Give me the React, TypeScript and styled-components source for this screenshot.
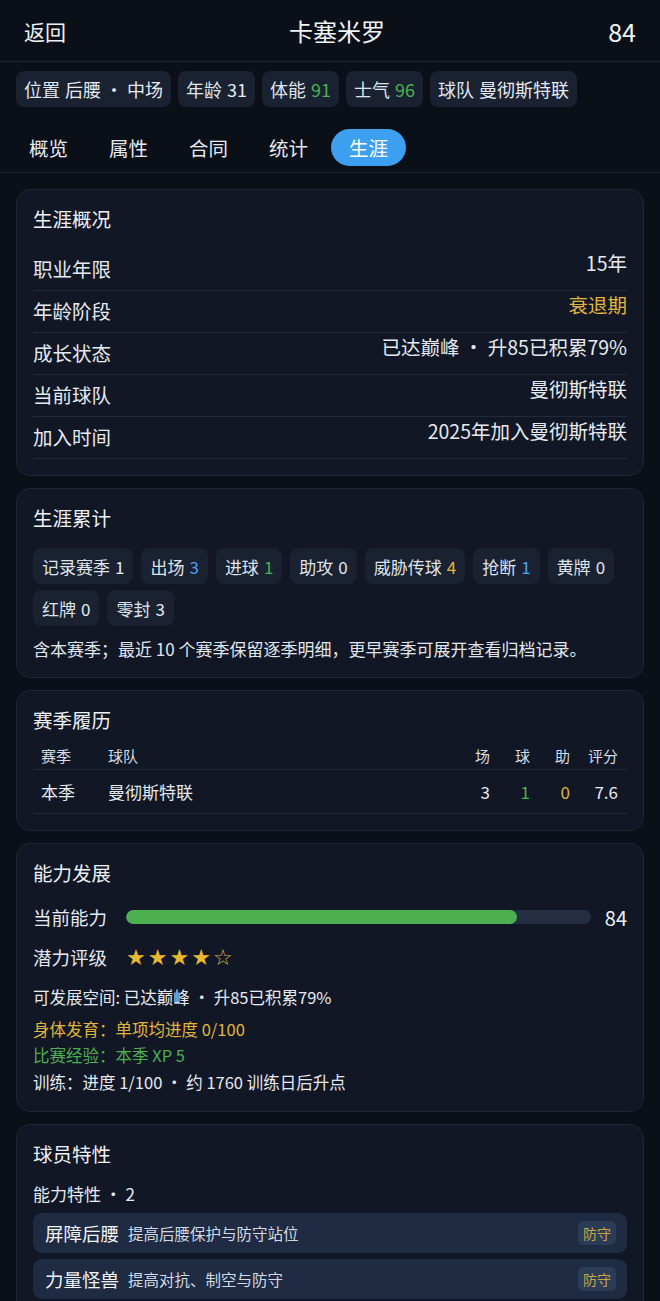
import React from 'react';
import styled, { createGlobalStyle } from 'styled-components';

// --- data ---
type Tone = 'plain' | 'blue' | 'green' | 'gold';

const TONE_COLORS: Record<Tone, string> = {
  plain: '#e6eaf0',
  blue: '#4aa3f0',
  green: '#4caf50',
  gold: '#e0b53c',
};

const INFO_CHIPS: { label: string; value: string; tone: Tone }[] = [
  { label: '位置', value: '后腰 · 中场', tone: 'plain' },
  { label: '年龄', value: '31', tone: 'plain' },
  { label: '体能', value: '91', tone: 'green' },
  { label: '士气', value: '96', tone: 'green' },
  { label: '球队', value: '曼彻斯特联', tone: 'plain' },
];

const TABS = ['概览', '属性', '合同', '统计', '生涯'];

const OVERVIEW_ROWS: { label: string; value: string; tone: Tone }[] = [
  { label: '职业年限', value: '15年', tone: 'plain' },
  { label: '年龄阶段', value: '衰退期', tone: 'gold' },
  { label: '成长状态', value: '已达巅峰 · 升85已积累79%', tone: 'plain' },
  { label: '当前球队', value: '曼彻斯特联', tone: 'plain' },
  { label: '加入时间', value: '2025年加入曼彻斯特联', tone: 'plain' },
];

const TOTALS: { label: string; value: string; tone: Tone }[] = [
  { label: '记录赛季', value: '1', tone: 'plain' },
  { label: '出场', value: '3', tone: 'blue' },
  { label: '进球', value: '1', tone: 'green' },
  { label: '助攻', value: '0', tone: 'plain' },
  { label: '威胁传球', value: '4', tone: 'gold' },
  { label: '抢断', value: '1', tone: 'blue' },
  { label: '黄牌', value: '0', tone: 'plain' },
  { label: '红牌', value: '0', tone: 'plain' },
  { label: '零封', value: '3', tone: 'plain' },
];

const TRAITS = [
  { name: '屏障后腰', desc: '提高后腰保护与防守站位', tag: '防守' },
  { name: '力量怪兽', desc: '提高对抗、制空与防守', tag: '防守' },
];

const ABILITY = 84;

// --- styles ---
const GlobalStyle = createGlobalStyle`
  body {
    margin: 0;
    background: #0b0f18;
    font-family: 'Noto Sans CJK SC', 'Noto Sans', sans-serif;
    color: #e6eaf0;
  }
`;

const Page = styled.div`
  width: 660px;
  min-height: 1301px;
  background: #0b0f18;
`;

const Header = styled.header`
  display: flex;
  justify-content: space-between;
  align-items: center;
  height: 61px;
  padding: 0 24px;
  border-bottom: 1px solid #1d2430;
`;

const BackLink = styled.span`
  font-size: 21px;
  color: #eef1f5;
`;

const Title = styled.h1`
  margin: 0;
  font-size: 24px;
  font-weight: 400;
  color: #f2f4f7;
`;

const Rating = styled.span`
  font-size: 25px;
  color: #f2f4f7;
`;

const InfoRow = styled.div`
  display: flex;
  flex-wrap: wrap;
  gap: 7px;
  padding: 9px 16px 0;
`;

const Chip = styled.span<{ $size: number; $pad: number }>`
  display: inline-flex;
  align-items: center;
  gap: 5px;
  height: 36px;
  padding: 0 ${({ $pad }) => $pad}px;
  border-radius: 8px;
  background: #1a2130;
  font-size: ${({ $size }) => $size}px;
  color: #dfe4ec;
  white-space: nowrap;
`;

const ChipValue = styled.span<{ $tone: Tone }>`
  color: ${({ $tone }) => TONE_COLORS[$tone]};
`;

const TabBar = styled.nav`
  display: flex;
  gap: 5px;
  padding: 22px 11px 6px;
  border-bottom: 1px solid #1d2430;
`;

const Tab = styled.span<{ $active: boolean }>`
  display: inline-flex;
  align-items: center;
  justify-content: center;
  width: 75px;
  height: 37px;
  border-radius: 19px;
  font-size: 19.5px;
  color: ${({ $active }) => ($active ? '#ffffff' : '#e6eaf0')};
  background: ${({ $active }) => ($active ? '#3d9ff0' : 'transparent')};
`;

const Content = styled.main`
  display: flex;
  flex-direction: column;
  gap: 12px;
  padding: 16px;
`;

const Card = styled.section`
  background: #111725;
  border: 1px solid #1e2534;
  border-radius: 14px;
  padding: 16px;
`;

const CardTitle = styled.h2`
  margin: 0;
  font-size: 19.5px;
  line-height: 26px;
  font-weight: 400;
  color: #eef1f5;
`;

const KeyValueList = styled.div`
  margin-top: 17px;
`;

const KeyValueRow = styled.div`
  display: flex;
  justify-content: space-between;
  align-items: flex-start;
  box-sizing: border-box;
  height: 42px;
  padding-top: 6px;
  border-bottom: 1px solid #232b3a;
`;

const KeyLabel = styled.span`
  font-size: 19.5px;
  line-height: 28px;
  color: #e6eaf0;
`;

const KeyValue = styled.span<{ $tone: Tone }>`
  font-size: 19.5px;
  line-height: 16px;
  color: ${({ $tone }) => TONE_COLORS[$tone]};
`;

const ChipWrap = styled.div`
  display: flex;
  flex-wrap: wrap;
  gap: 6px 8px;
  margin-top: 17px;
`;

const Note = styled.p`
  margin: 11px 0 0;
  font-size: 17px;
  line-height: 24px;
  color: #e1e6ed;
`;

const TableRow = styled.div<{ $head?: boolean }>`
  display: grid;
  grid-template-columns: 67px 1fr 40px 40px 40px 48px;
  align-items: center;
  height: ${({ $head }) => ($head ? 28 : 43)}px;
  padding: 0 9px 0 8px;
  border-bottom: 1px solid #232b3a;
  font-size: ${({ $head }) => ($head ? 15 : 17)}px;
  color: ${({ $head }) => ($head ? '#d7dce4' : '#e6eaf0')};
  &:first-of-type {
    margin-top: 8px;
  }
`;

const Cell = styled.span<{ $num?: boolean; $tone?: Tone }>`
  text-align: ${({ $num }) => ($num ? 'right' : 'left')};
  color: ${({ $tone }) => ($tone ? TONE_COLORS[$tone] : 'inherit')};
`;

const MeterRow = styled.div`
  display: flex;
  align-items: center;
  gap: 11px;
  height: 28px;
  margin-top: 17px;
`;

const MeterLabel = styled.span`
  margin-right: 8px;
  font-size: 18.5px;
  color: #e6eaf0;
  white-space: nowrap;
`;

const Track = styled.div`
  flex: 1;
  height: 14px;
  border-radius: 7px;
  background: #252e42;
  overflow: hidden;
`;

const Fill = styled.div`
  height: 100%;
  border-radius: 7px;
  background: #4caf50;
`;

const MeterValue = styled.span`
  width: 25px;
  text-align: right;
  font-size: 20px;
  color: #eef1f5;
`;

const StarRow = styled.div`
  display: flex;
  align-items: center;
  gap: 11px;
  height: 28px;
  margin-top: 12px;
`;

const Stars = styled.span`
  display: inline-flex;
  gap: 2px;
  font-family: 'DejaVu Sans', sans-serif;
  font-size: 22px;
`;

const Star = styled.span<{ $on: boolean }>`
  color: ${({ $on }) => ($on ? '#e8b92e' : '#d8b24a')};
`;

const DevLine = styled.p<{ $tone: Tone; $gap: number }>`
  margin: ${({ $gap }) => $gap}px 0 0;
  font-size: 16.5px;
  line-height: 26px;
  color: ${({ $tone }) => ($tone === 'plain' ? '#e6eaf0' : TONE_COLORS[$tone])};
`;

const SubTitle = styled.div`
  margin-top: 14px;
  font-size: 17px;
  line-height: 26px;
  color: #e6eaf0;
`;

const TraitList = styled.div`
  display: flex;
  flex-direction: column;
  gap: 6px;
  margin-top: 6px;
`;

const TraitRow = styled.div`
  display: flex;
  align-items: center;
  gap: 9px;
  height: 40px;
  padding: 0 11px 0 12px;
  border-radius: 9px;
  background: #1e2b42;
`;

const TraitName = styled.span`
  font-size: 18.5px;
  color: #f2f4f7;
`;

const TraitDesc = styled.span`
  flex: 1;
  font-size: 15.5px;
  color: #d3d9e2;
`;

const TraitTag = styled.span`
  padding: 2px 5px;
  border-radius: 5px;
  background: #2b3c57;
  font-size: 14px;
  color: #c9a544;
`;

// --- component ---
const App: React.FC = () => {
  return (
    <Page>
      <GlobalStyle />
      <Header>
        <BackLink>返回</BackLink>
        <Title>卡塞米罗</Title>
        <Rating>84</Rating>
      </Header>

      <InfoRow>
        {INFO_CHIPS.map((chip) => (
          <Chip key={chip.label} $size={18} $pad={8}>
            {chip.label}
            <ChipValue $tone={chip.tone}>{chip.value}</ChipValue>
          </Chip>
        ))}
      </InfoRow>

      <TabBar>
        {TABS.map((tab) => (
          <Tab key={tab} $active={tab === '生涯'}>
            {tab}
          </Tab>
        ))}
      </TabBar>

      <Content>
        <Card>
          <CardTitle>生涯概况</CardTitle>
          <KeyValueList>
            {OVERVIEW_ROWS.map((row) => (
              <KeyValueRow key={row.label}>
                <KeyLabel>{row.label}</KeyLabel>
                <KeyValue $tone={row.tone}>{row.value}</KeyValue>
              </KeyValueRow>
            ))}
          </KeyValueList>
        </Card>

        <Card>
          <CardTitle>生涯累计</CardTitle>
          <ChipWrap>
            {TOTALS.map((item) => (
              <Chip key={item.label} $size={17} $pad={9}>
                {item.label}
                <ChipValue $tone={item.tone}>{item.value}</ChipValue>
              </Chip>
            ))}
          </ChipWrap>
          <Note>含本赛季；最近 10 个赛季保留逐季明细，更早赛季可展开查看归档记录。</Note>
        </Card>

        <Card>
          <CardTitle>赛季履历</CardTitle>
          <div>
            <TableRow $head>
              <Cell>赛季</Cell>
              <Cell>球队</Cell>
              <Cell $num>场</Cell>
              <Cell $num>球</Cell>
              <Cell $num>助</Cell>
              <Cell $num>评分</Cell>
            </TableRow>
            <TableRow>
              <Cell>本季</Cell>
              <Cell>曼彻斯特联</Cell>
              <Cell $num>3</Cell>
              <Cell $num $tone="green">1</Cell>
              <Cell $num $tone="gold">0</Cell>
              <Cell $num>7.6</Cell>
            </TableRow>
          </div>
        </Card>

        <Card>
          <CardTitle>能力发展</CardTitle>
          <MeterRow>
            <MeterLabel>当前能力</MeterLabel>
            <Track>
              <Fill style={{ width: `${ABILITY}%` }} />
            </Track>
            <MeterValue>{ABILITY}</MeterValue>
          </MeterRow>
          <StarRow>
            <MeterLabel>潜力评级</MeterLabel>
            <Stars>
              {[0, 1, 2, 3, 4].map((i) => (
                <Star key={i} $on={i < 4}>
                  {i < 4 ? '★' : '☆'}
                </Star>
              ))}
            </Stars>
          </StarRow>
          <DevLine $tone="plain" $gap={13}>可发展空间: 已达巅峰 · 升85已积累79%</DevLine>
          <DevLine $tone="gold" $gap={6}>身体发育：单项均进度 0/100</DevLine>
          <DevLine $tone="green" $gap={0}>比赛经验：本季 XP 5</DevLine>
          <DevLine $tone="plain" $gap={1}>训练：进度 1/100 · 约 1760 训练日后升点</DevLine>
        </Card>

        <Card>
          <CardTitle>球员特性</CardTitle>
          <SubTitle>能力特性 · 2</SubTitle>
          <TraitList>
            {TRAITS.map((trait) => (
              <TraitRow key={trait.name}>
                <TraitName>{trait.name}</TraitName>
                <TraitDesc>{trait.desc}</TraitDesc>
                <TraitTag>{trait.tag}</TraitTag>
              </TraitRow>
            ))}
          </TraitList>
        </Card>
      </Content>
    </Page>
  );
};

export default App;
